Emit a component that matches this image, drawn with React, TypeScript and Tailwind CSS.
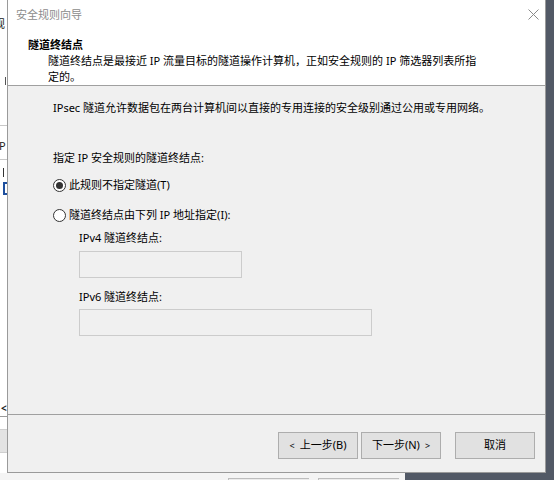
import React from "react";

const FONT = { fontFamily: '"Noto Sans", "Noto Sans CJK SC", sans-serif' };

function Radio({ checked, label }: { checked?: boolean; label: string }) {
  return (
    <div className="flex h-4 items-center gap-[2px]">
      <span className="flex h-[13px] w-[13px] items-center justify-center rounded-full border border-[#333333] bg-white">
        {checked && <span className="h-[7px] w-[7px] rounded-full bg-[#333333]" />}
      </span>
      <span className="ml-[1px] leading-4">{label}</span>
    </div>
  );
}

function WizardButton({ children }: { children: React.ReactNode }) {
  return (
    <button
      type="button"
      className="flex h-[27px] w-[80px] items-center justify-center border border-[#adadad] bg-[#e1e1e1] text-[11px] text-black"
    >
      {children}
    </button>
  );
}

function BackdropStrip() {
  return (
    <div className="flex w-[7px] shrink-0 flex-col overflow-hidden bg-white text-[11px] leading-none text-[#222]">
      <div className="mt-[18px] flex h-[12px] overflow-hidden">
        <span className="ml-[-6px]">规</span>
      </div>
      <div className="ml-[5px] mt-[47px] h-[8px] w-[1px] bg-[#555]" />
      <div className="mt-[40px] h-[1px] w-full bg-[#c8c8c8]" />
      <div className="mt-[14px] flex h-[10px] overflow-hidden">
        <span className="ml-[-1px]">P</span>
      </div>
      <div className="mt-[9px] h-[1px] w-full bg-[#c8c8c8]" />
      <div className="ml-[3px] mt-[8px] h-[9px] w-[1px] bg-[#333]" />
      <div className="ml-[3px] mt-[5px] h-[13px] w-[4px] border-2 border-r-0 border-[#1e4f9e]" />
      <div className="flex-1" />
      <div className="ml-[1px] h-[8px] text-[10px] font-bold leading-[8px]">&lt;</div>
      <div className="mt-[4px] h-[1px] w-full bg-[#9a9a9a]" />
      <div className="mt-[12px] h-[24px] w-full border-y border-[#cfcfcf] bg-[#e3e3e3]" />
      <div className="h-[20px]" />
    </div>
  );
}

export default function App() {
  return (
    <div className="flex h-[480px] w-[554px] flex-col overflow-hidden bg-[#525966] text-black" style={FONT}>
      <div className="flex h-[473px]">
        <BackdropStrip />

        <div className="flex w-[539px] shrink-0 flex-col border-x border-b border-[#9a9a9a] bg-[#f0f0f0] text-[11px]">
          <div className="flex h-[86px] flex-col border-b border-[#a0a0a0] bg-white">
            <div className="flex items-start justify-between pl-[8px] pr-[6px] pt-[7px]">
              <span className="leading-4 text-[#8c8c8c]">安全规则向导</span>
              <svg width="11" height="11" viewBox="0 0 11 11" className="mt-[2px]">
                <path d="M0.5 0.5 L10.5 10.5 M10.5 0.5 L0.5 10.5" stroke="#8a8a8a" strokeWidth="1" fill="none" />
              </svg>
            </div>
            <div className="mt-[14px] pl-[20px] font-bold leading-4">隧道终结点</div>
            <div className="pl-[40px] leading-4">
              隧道终结点是最接近 IP 流量目标的隧道操作计算机，正如安全规则的 IP 筛选器列表所指
              <br />
              定的。
            </div>
          </div>

          <div className="flex h-[328px] flex-col pl-[45px] pt-[14px]">
            <div className="leading-4">IPsec 隧道允许数据包在两台计算机间以直接的专用连接的安全级别通过公用或专用网络。</div>
            <div className="mt-[34px] leading-4">指定 IP 安全规则的隧道终结点:</div>
            <div className="mt-[11px]">
              <Radio checked label="此规则不指定隧道(T)" />
            </div>
            <div className="mt-[14px]">
              <Radio label="隧道终结点由下列 IP 地址指定(I):" />
            </div>
            <div className="flex flex-col pl-[26px]">
              <div className="mt-[7px] leading-4">IPv4 隧道终结点:</div>
              <div className="mt-[5px] h-[27px] w-[163px] border border-[#cccccc] bg-[#f0f0f0]" />
              <div className="mt-[11px] leading-4">IPv6 隧道终结点:</div>
              <div className="mt-[4px] h-[27px] w-[293px] border border-[#cccccc] bg-[#f0f0f0]" />
            </div>
          </div>

          <div className="flex h-[57px] justify-end border-t border-[#a0a0a0] pr-[10px] pt-[17px]">
            <div className="flex gap-[3px]">
              <WizardButton>
                <span className="mr-[5px] text-[9px]">&lt;</span>上一步(B)
              </WizardButton>
              <WizardButton>
                下一步(N)<span className="ml-[5px] text-[9px]">&gt;</span>
              </WizardButton>
            </div>
            <div className="ml-[14px]">
              <WizardButton>取消</WizardButton>
            </div>
          </div>
        </div>

        <div className="flex-1 bg-[#525966]" />
      </div>

      <div className="flex h-[7px]">
        <div className="flex w-[405px] bg-[#f4f4f4] pt-[5px]">
          <div className="ml-[228px] h-full w-[81px] border-l border-t border-[#bdbdbd] bg-[#ececec]" />
          <div className="ml-[9px] h-full w-[81px] border-l border-t border-[#bdbdbd] bg-[#ececec]" />
        </div>
        <div className="flex-1 bg-[#525966]" />
      </div>
    </div>
  );
}
